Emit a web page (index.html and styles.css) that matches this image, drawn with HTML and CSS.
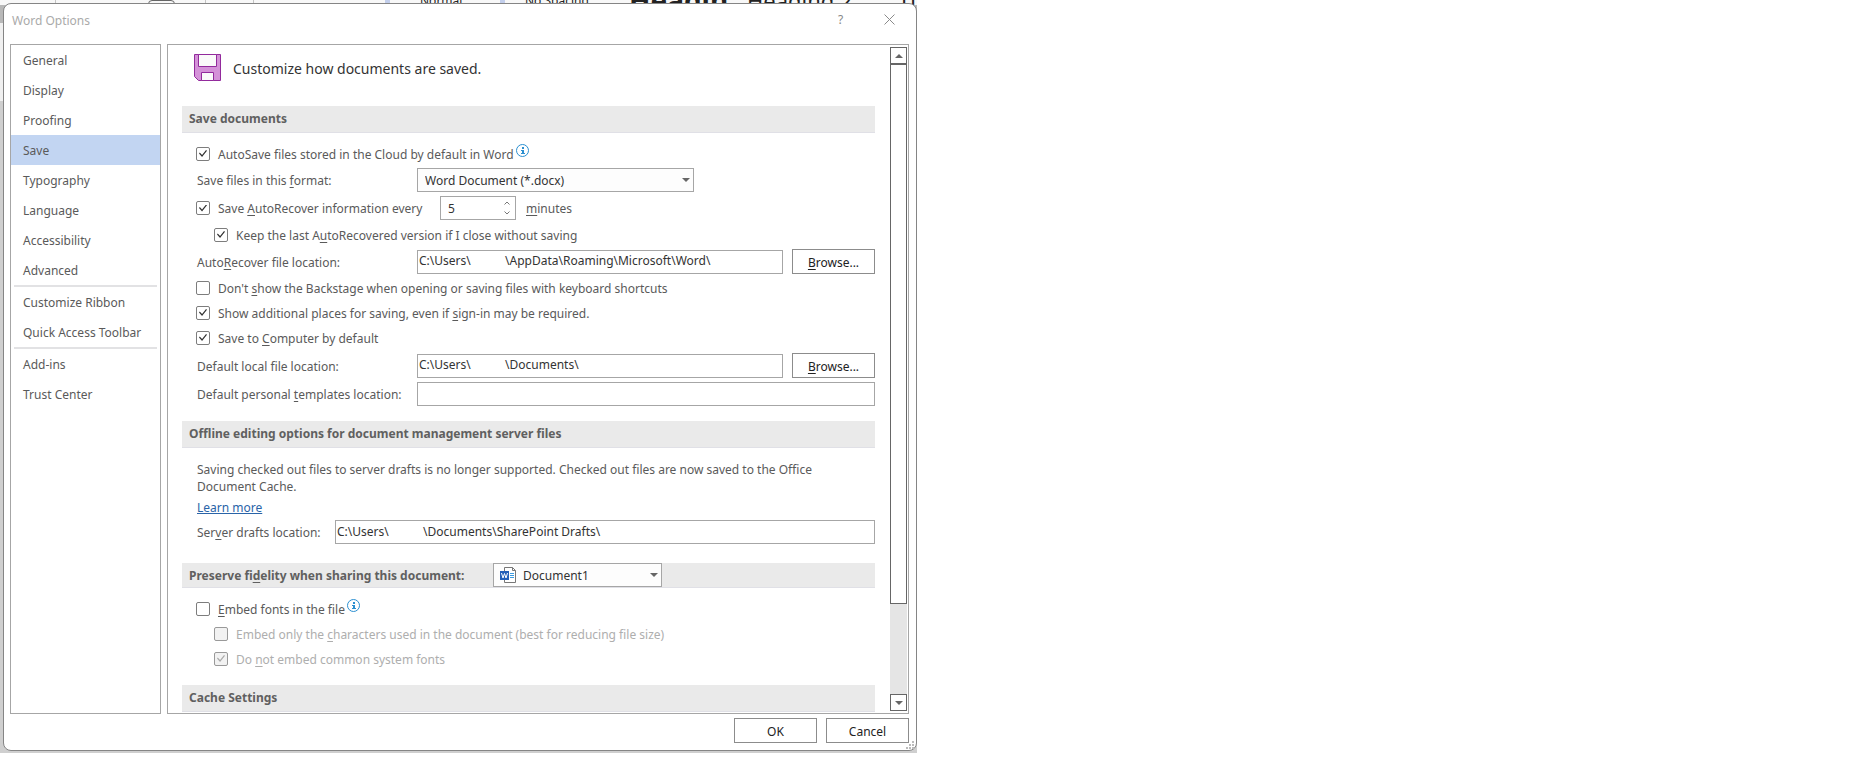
FILE: index.html
```
<!DOCTYPE html>
<html lang="en">

<head>
    <meta charset="UTF-8">
    <meta name="viewport" content="width=device-width, initial-scale=1.0">
    <title>Word Options</title>
    <link rel="stylesheet" href="styles.css">
</head>

<body>
    <div class="desktop">
        <!-- Bottom edge of the styles gallery behind the dialog -->
        <div class="ribbon" aria-hidden="true">
            <span class="ribbon-pill"></span>
            <span class="ribbon-line line-a"></span>
            <span class="ribbon-line line-b"></span>
            <span class="ribbon-line line-c"></span>
            <span class="ribbon-mark mark-a"></span>
            <span class="ribbon-style style-normal">Normal</span>
            <span class="ribbon-mark mark-b"></span>
            <span class="ribbon-style style-spacing">No Spacing</span>
            <span class="ribbon-style style-h1">Headin</span>
            <span class="ribbon-style style-h2">Heading 2</span>
            <span class="ribbon-style style-title">Title</span>
        </div>

        <main class="dialog">
            <header class="titlebar">
                <h1>Word Options</h1>
                <button class="title-btn" type="button" aria-label="Help">?</button>
                <button class="title-btn" type="button" aria-label="Close">
                    <svg width="11" height="11" viewBox="0 0 11 11" fill="none" stroke="#8a8a8a">
                        <path d="M.5 .5l10 10M10.5 .5l-10 10" />
                    </svg>
                </button>
            </header>

            <div class="panels">
                <nav class="sidebar">
                    <a href="#">General</a>
                    <a href="#">Display</a>
                    <a href="#">Proofing</a>
                    <a href="#" class="active">Save</a>
                    <a href="#">Typography</a>
                    <a href="#">Language</a>
                    <a href="#">Accessibility</a>
                    <a href="#">Advanced</a>
                    <hr>
                    <a href="#">Customize Ribbon</a>
                    <a href="#">Quick Access Toolbar</a>
                    <hr>
                    <a href="#">Add-ins</a>
                    <a href="#">Trust Center</a>
                </nav>

                <div class="content">
                    <div class="page">
                        <div class="intro">
                            <svg width="27" height="27" viewBox="0 0 27 27">
                                <path d="M.5 .5h26v26H4.500L.5 22.500z" fill="#d492d8" stroke="#922a9c" />
                                <path d="M4.500 .5h18v12h-18zM7.500 18.500h12v8h-12z" fill="#fafafa" stroke="#922a9c" />
                            </svg>
                            <p>Customize how documents are saved.</p>
                        </div>

                        <h2>Save documents</h2>
                        <section class="rows">
                            <div class="check-row">
                                <input type="checkbox" id="autosave" checked>
                                <label for="autosave">AutoSave files stored in the Cloud by default in Word</label>
                                <svg class="info" width="13" height="13" viewBox="0 0 13 13">
                                    <circle cx="6.500" cy="6.500" r="6" fill="none" stroke="#2b8fd0" />
                                    <path d="M6 3h2v2H6zM5 6h3v4h-2V7H5zM5 9h4v1H5z" fill="#2b8fd0" />
                                </svg>
                            </div>
                            <div class="field-row">
                                <label for="format">Save files in this <u>f</u>ormat:</label>
                                <div class="select format-select">
                                    <select id="format">
                                        <option>Word Document (*.docx)</option>
                                    </select>
                                    <svg class="arrow" width="8" height="4" viewBox="0 0 8 4"><path d="M0 0h8L4 4z" fill="#666" /></svg>
                                </div>
                            </div>
                            <div class="check-row">
                                <input type="checkbox" id="recover" checked>
                                <label for="recover">Save <u>A</u>utoRecover information every</label>
                                <div class="spinner">
                                    <input type="number" id="minutes" value="5">
                                    <svg width="6" height="14" viewBox="0 0 6 14" fill="none" stroke="#777">
                                        <path d="M.5 3.500L3 1l2.500 2.500M.5 10.500L3 13l2.500-2.500" />
                                    </svg>
                                </div>
                                <label for="minutes" class="unit"><u>m</u>inutes</label>
                            </div>
                            <div class="check-row indent">
                                <input type="checkbox" id="keep-last" checked>
                                <label for="keep-last">Keep the last A<u>u</u>toRecovered version if I close without saving</label>
                            </div>
                            <div class="field-row">
                                <label for="recover-path">Auto<u>R</u>ecover file location:</label>
                                <input type="text" id="recover-path" value="C:\Users\           \AppData\Roaming\Microsoft\Word\">
                                <button type="button" class="btn"><span><u>B</u>rowse...</span></button>
                            </div>
                            <div class="check-row">
                                <input type="checkbox" id="backstage">
                                <label for="backstage">Don't <u>s</u>how the Backstage when opening or saving files with keyboard shortcuts</label>
                            </div>
                            <div class="check-row">
                                <input type="checkbox" id="places" checked>
                                <label for="places">Show additional places for saving, even if <u>s</u>ign-in may be required.</label>
                            </div>
                            <div class="check-row">
                                <input type="checkbox" id="computer" checked>
                                <label for="computer">Save to <u>C</u>omputer by default</label>
                            </div>
                            <div class="locations">
                                <div class="field-row">
                                    <label for="local-path">Default local f<u>i</u>le location:</label>
                                    <input type="text" id="local-path" value="C:\Users\           \Documents\">
                                    <button type="button" class="btn"><span><u>B</u>rowse...</span></button>
                                </div>
                                <div class="field-row">
                                    <label for="templates-path">Default personal <u>t</u>emplates location:</label>
                                    <input type="text" id="templates-path">
                                </div>
                            </div>
                        </section>

                        <h2>Offline editing options for document management server files</h2>
                        <section class="offline">
                            <p>Saving checked out files to server drafts is no longer supported. Checked out files are now saved to the Office Document Cache.</p>
                            <a href="#">Learn more</a>
                            <div class="field-row drafts">
                                <label for="drafts-path">Ser<u>v</u>er drafts location:</label>
                                <input type="text" id="drafts-path" value="C:\Users\           \Documents\SharePoint Drafts\">
                            </div>
                        </section>

                        <div class="bar">
                            <label for="document">Preserve fi<u>d</u>elity when sharing this document:</label>
                            <div class="select document-select">
                                <svg class="doc-icon" width="17" height="16" viewBox="0 0 17 16">
                                    <path d="M4.500 .5h8l3 3v12h-11z" fill="#fff" stroke="#777" />
                                    <path d="M12.500 .5v3h3" fill="none" stroke="#777" />
                                    <path d="M10 6.500h4M10 8.500h4M10 10.500h4" stroke="#3c9be0" />
                                    <path d="M0 4h9v9H0z" fill="#2560b8" />
                                    <path d="M1.500 6l1.500 5 1.500-4.500L6 11l1.500-5" fill="none" stroke="#fff" />
                                </svg>
                                <select id="document">
                                    <option>Document1</option>
                                </select>
                                <svg class="arrow" width="8" height="4" viewBox="0 0 8 4"><path d="M0 0h8L4 4z" fill="#666" /></svg>
                            </div>
                        </div>
                        <section class="rows embed">
                            <div class="check-row">
                                <input type="checkbox" id="embed">
                                <label for="embed"><u>E</u>mbed fonts in the file</label>
                                <svg class="info" width="13" height="13" viewBox="0 0 13 13">
                                    <circle cx="6.500" cy="6.500" r="6" fill="none" stroke="#2b8fd0" />
                                    <path d="M6 3h2v2H6zM5 6h3v4h-2V7H5zM5 9h4v1H5z" fill="#2b8fd0" />
                                </svg>
                            </div>
                            <div class="check-row indent">
                                <input type="checkbox" id="embed-used" disabled>
                                <label for="embed-used">Embed only the <u>c</u>haracters used in the document (best for reducing file size)</label>
                            </div>
                            <div class="check-row indent">
                                <input type="checkbox" id="embed-system" checked disabled>
                                <label for="embed-system">Do <u>n</u>ot embed common system fonts</label>
                            </div>
                        </section>

                        <h2>Cache Settings</h2>
                    </div>

                    <div class="scrollbar">
                        <button type="button" aria-label="Scroll up">
                            <svg width="8" height="4" viewBox="0 0 8 4"><path d="M0 4h8L4 0z" fill="#666" /></svg>
                        </button>
                        <div class="thumb"></div>
                        <div class="track"></div>
                        <button type="button" aria-label="Scroll down">
                            <svg width="8" height="4" viewBox="0 0 8 4"><path d="M0 0h8L4 4z" fill="#666" /></svg>
                        </button>
                    </div>
                </div>
            </div>

            <footer class="actions">
                <button type="button" class="btn">OK</button>
                <button type="button" class="btn">Cancel</button>
                <svg class="grip" width="8" height="8" viewBox="0 0 8 8" fill="#bbb">
                    <path d="M6 0h2v2H6zM3 3h2v2H3zM6 3h2v2H6zM0 6h2v2H0zM3 6h2v2H3zM6 6h2v2H6z" />
                </svg>
            </footer>
        </main>
    </div>
</body>

</html>
```
FILE: styles.css
```
* {
    box-sizing: border-box;
}

body {
    margin: 0;
    background: #fff;
    color: #5a5a5a;
    font-family: 'Noto Sans', 'Open Sans', sans-serif;
    font-size: 12px;
    line-height: 17px;
}

h1,
h2,
p {
    margin: 0;
}

input,
select,
button {
    margin: 0;
    font: inherit;
    color: #333;
}

u {
    text-underline-offset: 2px;
}

/* Window behind the dialog */
.desktop {
    position: relative;
    max-width: 917px;
    padding: 3px 0 2px 3px;
    background: linear-gradient(#fbfbfb 5px, #b8b8b8 5px, #b8b8b8 23px, #f0f0f0 23px, #f0f0f0 101px, #cfcfcf 101px);
}

.ribbon {
    position: absolute;
    top: 0;
    left: 0;
    width: 100%;
    height: 5px;
    overflow: hidden;
    background: #f8f8f8;
    color: #222;
}

.ribbon span {
    position: absolute;
}

.ribbon-line {
    width: 1px;
    height: 5px;
    background: #c4c4c4;
}

.line-a {
    left: 55px;
}

.line-b {
    left: 205px;
}

.line-c {
    left: 253px;
}

.ribbon-pill {
    left: 148px;
    top: 0;
    width: 27px;
    height: 12px;
    border: 1px solid #666;
    border-radius: 4px;
}

.ribbon-mark {
    width: 5px;
    height: 5px;
    background: #c3cfec;
}

.mark-a {
    left: 385px;
}

.mark-b {
    left: 500px;
}

.ribbon-style {
    bottom: -4px;
    white-space: nowrap;
}

.style-normal {
    left: 420px;
}

.style-spacing {
    left: 525px;
}

.ribbon .style-h1 {
    left: 629px;
    font-size: 28px;
    font-weight: 700;
}

.ribbon .style-h2 {
    left: 747px;
    font-size: 22px;
}

.ribbon .style-title {
    left: 898px;
    font-size: 22px;
}

/* Dialog frame */
.dialog {
    position: relative;
    padding: 0 7px 7px 6px;
    background: #fff;
    border: 1px solid #858585;
    border-radius: 8px;
}

.titlebar {
    display: flex;
    align-items: flex-start;
    height: 40px;
    padding-top: 4px;
}

.titlebar h1 {
    flex: 1;
    padding-left: 2px;
    font-size: 12px;
    font-weight: 400;
    line-height: 25px;
    color: #aaa;
}

.title-btn {
    display: grid;
    place-items: center;
    width: 49px;
    height: 22px;
    padding: 0;
    background: none;
    border: 0;
    color: #888;
}

.title-btn:last-child {
    margin-right: -5px;
}

.panels {
    display: flex;
    gap: 6px;
}

/* Categories */
.sidebar {
    width: 151px;
    flex-shrink: 0;
    border: 1px solid #a6a6a6;
}

.sidebar a {
    display: block;
    padding: 1px 0 0 12px;
    line-height: 29px;
    color: #5a5a5a;
    text-decoration: none;
}

.sidebar .active {
    background: #c2d5f2;
}

.sidebar hr {
    height: 2px;
    margin: 0 3px;
    background: #e2e2e4;
    border: 0;
}

/* Options page */
.content {
    display: flex;
    flex: 1;
    gap: 15px;
    padding: 2px 1px 1px 14px;
    border: 1px solid #a6a6a6;
}

.page {
    flex: 1;
}

.intro {
    display: flex;
    gap: 12px;
    height: 59px;
    padding: 7px 0 0 12px;
    font-size: 14px;
    line-height: 29px;
    color: #333;
}

h2,
.bar {
    background: #eaeaea;
    border-bottom: 1px solid #e0e0e6;
    color: #606060;
    font-size: 12px;
    font-weight: 700;
}

h2 {
    padding-left: 7px;
    line-height: 26px;
}

.bar {
    display: flex;
    align-items: center;
    gap: 20px;
    height: 25px;
    padding-left: 7px;
}

.bar > label {
    min-width: 284px;
}

.rows {
    display: flex;
    flex-direction: column;
    gap: 4px;
    padding: 10px 0 15px 14px;
}

.check-row {
    display: flex;
    align-items: center;
    min-height: 21px;
}

.check-row label {
    padding: 1px 0 0 8px;
}

.check-row .unit {
    padding-left: 10px;
}

.check-row.indent {
    padding-left: 18px;
}

input[type="checkbox"] {
    appearance: none;
    display: grid;
    place-items: center;
    width: 14px;
    height: 14px;
    background: #fff;
    border: 1px solid #7d7d7d;
    border-radius: 2px;
}

input[type="checkbox"]:checked::before {
    content: "";
    width: 8px;
    height: 7px;
    background: #333;
    clip-path: polygon(0 50%, 10% 37%, 38% 70%, 88% 0, 100% 12%, 38% 100%);
}

input[type="checkbox"]:disabled {
    background: #f2f2f2;
    border-color: #999;
}

input[type="checkbox"]:disabled::before {
    background: #aaa;
}

input[type="checkbox"]:disabled + label {
    color: #aeaeae;
}

.info {
    align-self: flex-start;
    margin: 1px 0 0 2px;
}

.field-row {
    display: grid;
    grid-template-columns: 220px 1fr auto;
    align-items: center;
    height: 24px;
    padding-left: 1px;
}

.field-row label {
    padding-top: 1px;
    white-space: nowrap;
}

input[type="text"] {
    width: 100%;
    height: 24px;
    padding: 0 1px 2px;
    border: 1px solid #a6a6a6;
    background: #fff;
}

input[type="text"]:last-child {
    grid-column: 2 / 4;
}

.btn {
    width: 83px;
    height: 25px;
    padding: 1px 0 0;
    background: #fff;
    border: 1px solid #8c8c8c;
    color: #222;
}

.field-row .btn {
    margin-left: 9px;
}

.locations {
    display: flex;
    flex-direction: column;
    gap: 5px;
    margin-top: 1px;
}

/* Drop-downs and spinner */
.select {
    position: relative;
    height: 24px;
}

.select select {
    appearance: none;
    width: 100%;
    height: 24px;
    padding: 1px 20px 0 7px;
    background: #fdfdfd;
    border: 1px solid #a6a6a6;
    border-radius: 0;
}

.format-select {
    width: 277px;
}

.document-select {
    width: 169px;
    font-weight: 400;
}

.document-select select {
    padding-left: 29px;
}

.arrow {
    position: absolute;
    top: 10px;
    right: 4px;
}

.doc-icon {
    position: absolute;
    top: 4px;
    left: 7px;
}

#recover + label {
    min-width: 220px;
}

.spinner {
    position: relative;
    width: 76px;
    height: 24px;
    margin-left: 10px;
}

.spinner input {
    appearance: textfield;
    width: 100%;
    height: 24px;
    padding: 0 20px 0 7px;
    border: 1px solid #a6a6a6;
}

.spinner svg {
    position: absolute;
    top: 5px;
    right: 6px;
}

/* Server drafts */
.offline {
    display: flex;
    flex-direction: column;
    align-items: flex-start;
    gap: 4px;
    padding: 13px 0 19px 15px;
}

.offline p {
    padding-right: 32px;
}

.offline a {
    color: #2a64a8;
}

.drafts {
    width: 100%;
    grid-template-columns: 138px 1fr auto;
    padding-left: 0;
}

.embed {
    padding: 10px 0 16px 14px;
}

/* Scrollbar */
.scrollbar {
    display: flex;
    flex-direction: column;
    width: 17px;
    margin-bottom: 1px;
    background: #e5e5e5;
}

.scrollbar button {
    display: grid;
    place-items: center;
    width: 17px;
    height: 17px;
    padding: 0;
    background: #fff;
    border: 1px solid #666;
}

.thumb {
    flex: 541;
    background: #fff;
    border: 1px solid #666;
}

.track {
    flex: 90;
}

/* Bottom buttons */
.actions {
    display: flex;
    justify-content: flex-end;
    gap: 9px;
    padding-top: 4px;
}

.grip {
    position: absolute;
    right: 2px;
    bottom: 1px;
}
```
